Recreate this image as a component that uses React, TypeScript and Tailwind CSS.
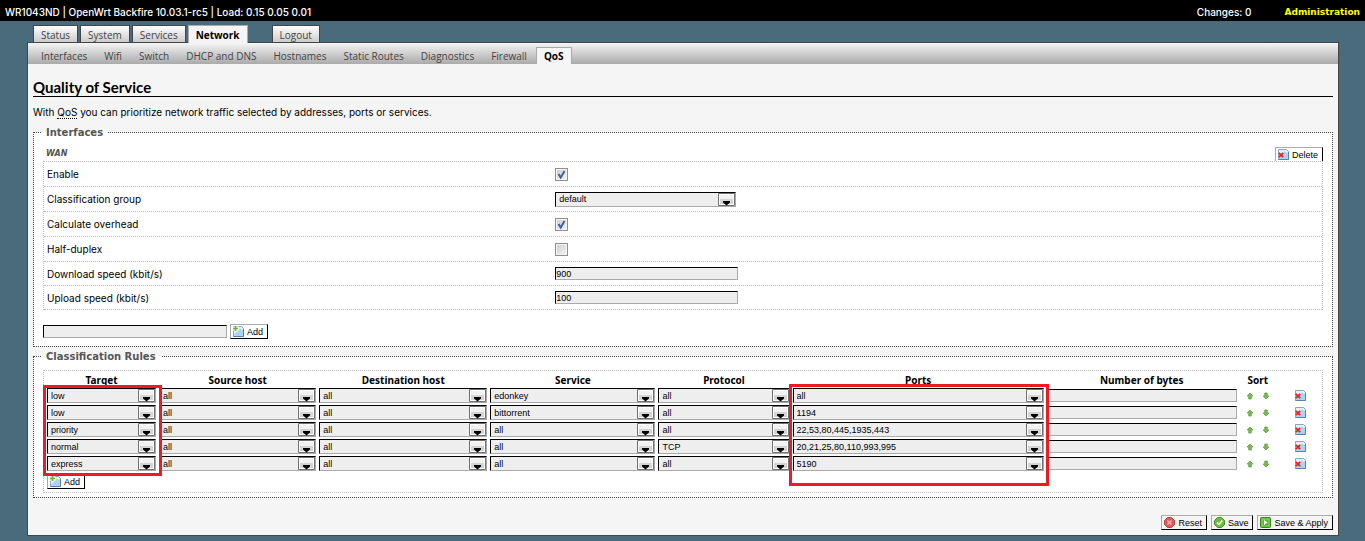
import React from 'react';
import { clsx } from 'clsx';

const TABS = ['Status', 'System', 'Services', 'Network'];
const SUB_TABS = ['Interfaces', 'Wifi', 'Switch', 'DHCP and DNS', 'Hostnames', 'Static Routes', 'Diagnostics', 'Firewall', 'QoS'];

const RULES = [
    { target: 'low', source: 'all', dest: 'all', service: 'edonkey', proto: 'all', ports: 'all' },
    { target: 'low', source: 'all', dest: 'all', service: 'bittorrent', proto: 'all', ports: '1194' },
    { target: 'priority', source: 'all', dest: 'all', service: 'all', proto: 'all', ports: '22,53,80,445,1935,443' },
    { target: 'normal', source: 'all', dest: 'all', service: 'all', proto: 'TCP', ports: '20,21,25,80,110,993,995' },
    { target: 'express', source: 'all', dest: 'all', service: 'all', proto: 'all', ports: '5190' },
];

const FIELD = 'block border border-t-black border-l-black border-r-[#aaa] border-b-[#aaa] bg-[#eee] font-["Liberation_Sans",sans-serif] text-[9px] leading-[12px] text-black outline-none';

function PageIcon({ kind }: { kind: 'add' | 'delete' }) {
    return (
        <svg width="11" height="11" viewBox="0 0 11 11" className="shrink-0" aria-hidden="true">
            <path d="M.5.5h8l2 2v8H.5z" fill="#a9d3f7" stroke="#8ba3c4" />
            <path d="M1 1h7L1 9z" fill="#e3f1fd" />
            <path d="M8 1v2h2" fill="#fff" stroke="#fff" strokeWidth=".8" />
            <path d="M10.500 3v7.500H.5" fill="none" stroke="#5f7fa8" />
            {kind === 'delete' ? (
                <path d="M.8 3.800l4.400 4.400M5.200 3.800L.8 8.200" stroke="#e0261d" strokeWidth="1.900" />
            ) : (
                <>
                    <path d="M0 0h5.500v5H0z" fill="#fff" fillOpacity=".7" />
                    <path d="M2.500 0v5M0 2.500h5" stroke="#6db52c" strokeWidth="1.700" />
                </>
            )}
        </svg>
    );
}

function ResetIcon() {
    return (
        <svg width="11" height="11" viewBox="0 0 11 11" className="shrink-0" aria-hidden="true">
            <path d="M3.500.5h4l3 3v4l-3 3h-4l-3-3v-4z" fill="#dc5a5a" stroke="#b94444" />
            <path d="M3.500 3.500l4 4M7.500 3.500l-4 4" stroke="#f4b5b5" strokeWidth="1.200" />
        </svg>
    );
}

function SaveIcon() {
    return (
        <svg width="11" height="11" viewBox="0 0 11 11" className="shrink-0" aria-hidden="true">
            <path d="M3.500.5h4l3 3v4l-3 3h-4l-3-3v-4z" fill="#6cbb3c" stroke="#469226" />
            <path d="M3 5.500l2 2 3.300-4" fill="none" stroke="#fff" strokeWidth="1.500" />
        </svg>
    );
}

function ApplyIcon() {
    return (
        <svg width="11" height="11" viewBox="0 0 11 11" className="shrink-0" aria-hidden="true">
            <rect x=".5" y=".5" width="10" height="10" rx="1" fill="#58b530" stroke="#37861c" />
            <rect x="2" y="2" width="7" height="7" fill="none" stroke="#a5dc87" strokeWidth=".7" />
            <path d="M4 3l3.500 2.500L4 8z" fill="#fff" />
        </svg>
    );
}

function SortIcon({ down }: { down?: boolean }) {
    return (
        <svg width="8" height="8" viewBox="0 0 8 8" className={clsx(down && 'rotate-180')} aria-hidden="true">
            <path d="M4 1L7 4H5.300v3H2.700V4H1z" fill="#79bd4a" stroke="#5f9a40" strokeWidth=".7" />
        </svg>
    );
}

function Button({ children, className, icon }: { children: React.ReactNode; className?: string; icon: React.ReactNode }) {
    return (
        <button
            type="button"
            className={clsx(
                'flex h-[15px] items-center gap-[3px] border border-t-[#aaa] border-l-[#aaa] border-r-black border-b-black pr-1 pl-[2px] font-["Liberation_Sans",sans-serif] text-[9px] leading-[12px] whitespace-nowrap text-black',
                className
            )}
        >
            {icon}
            {children}
        </button>
    );
}

function Select({ value, id, label, className }: { value: string; id?: string; label?: string; className?: string }) {
    return (
        <div className={clsx('relative', className)}>
            <select id={id} aria-label={label} defaultValue={value} className={clsx(FIELD, 'h-[15px] w-full appearance-none pl-[3px]')}>
                <option>{value}</option>
            </select>
            <svg width="17" height="13" viewBox="0 0 17 13" className="pointer-events-none absolute top-px right-px" aria-hidden="true">
                <path d="M.5.5h16v12H.5z" fill="#fff" stroke="#707070" />
                <path d="M2 2h13v4H2z" fill="#f2f2f2" />
                <path d="M2 6h13v5H2z" fill="#d4d4d4" />
                <path d="M5 8h7v1.500L8.500 12.500 5 9.500z" fill="#000" />
            </svg>
        </div>
    );
}

function Checkbox({ id, checked }: { id: string; checked?: boolean }) {
    return (
        <div className="relative size-[13px]">
            <input
                id={id}
                type="checkbox"
                defaultChecked={checked}
                className="peer block size-[13px] appearance-none border border-[#8e8f8f] bg-linear-to-br from-[#c8ccd2] to-[#f6f6f6] shadow-[inset_0_0_0_1px_#f4f4f4]"
            />
            <svg width="13" height="13" viewBox="0 0 13 13" className="pointer-events-none absolute inset-0 hidden peer-checked:block" aria-hidden="true">
                <path d="M3.500 6l2.200 3.500L9.500 3" fill="none" stroke="#4360a5" strokeWidth="2" />
            </svg>
        </div>
    );
}

function Row({ id, label, children, className }: { id: string; label: string; children: React.ReactNode; className?: string }) {
    return (
        <div className={clsx('grid grid-cols-[2fr_3fr] items-center border-b border-dotted border-[#bbb]', className)}>
            <label htmlFor={id} className="pl-[3px]">{label}</label>
            {children}
        </div>
    );
}

function Th({ children, marked }: { children?: React.ReactNode; marked?: string }) {
    return (
        <th className="relative h-[13px] p-0 text-center align-middle font-['Noto_Sans',sans-serif] text-[10px] leading-[12px] font-bold">
            {children}
            {marked && <span className={clsx('pointer-events-none absolute top-full z-10 border-[3px] border-[#ed1c24]', marked)} />}
        </th>
    );
}

export default function App() {
    return (
        <div className="min-h-screen bg-[#4a6b7c] font-['Inter',sans-serif] text-[10px] leading-[14px] text-black">
            <header className="flex h-[21px] items-center justify-between bg-black px-[5px] pt-[2px] font-medium text-white">
                <span>WR1043ND | OpenWrt Backfire 10.03.1-rc5 | Load: 0.15 0.05 0.01</span>
                <div className="flex gap-[33px]">
                    <a href="#changes">Changes: 0</a>
                    <a href="#admin" className="font-['DejaVu_Sans',sans-serif] text-[9px] font-bold text-[#ff0]">Administration</a>
                </div>
            </header>

            <nav className="relative mt-1 flex h-[18px] gap-[2px] pl-[33px] font-['Open_Sans',sans-serif] text-[#444]">
                {TABS.map((tab) => (
                    <a
                        key={tab}
                        href={`#${tab}`}
                        className={clsx(
                            'border border-b-0 px-[7px] pt-[2px]',
                            tab === 'Network' ? 'border-[#aaa] bg-[#f5f5f5] font-bold text-black' : 'mb-px border-[#444] bg-linear-to-b from-white to-[#ccc]'
                        )}
                    >
                        {tab}
                    </a>
                ))}
                <a href="#logout" className="mb-px ml-[22px] border border-b-0 border-[#444] bg-linear-to-b from-white to-[#ccc] px-[7px] pt-[2px]">
                    Logout
                </a>
            </nav>

            <div className="-mt-px mr-[26px] ml-[27px] border border-[#444] bg-[#f5f5f5]">
                <nav className="flex h-[21px] items-end gap-px bg-linear-to-b from-[#f5f5f5] to-[#aaa] pl-[5px] font-['Open_Sans',sans-serif] text-[#444]">
                    {SUB_TABS.map((tab) => (
                        <a
                            key={tab}
                            href={`#${tab}`}
                            className={clsx(
                                'h-[17px] border border-b-0 px-[7px] pt-px',
                                tab === 'QoS' ? 'border-[#aaa] bg-[#f5f5f5] font-bold text-black' : 'border-transparent'
                            )}
                        >
                            {tab}
                        </a>
                    ))}
                </nav>

                <main className="px-[5px] pb-[5px]">
                    <h2 className="mt-[14px] border-b border-black font-['Lato',sans-serif] text-[15px] leading-[18px] font-bold">Quality of Service</h2>
                    <p className="mt-2">
                        With <abbr title="Quality of Service" className="border-b border-dotted border-black no-underline">QoS</abbr> you can prioritize network traffic selected by addresses, ports or services.
                    </p>

                    <fieldset className="mt-[5px] border border-dotted border-[#444] bg-white px-[9px] pb-[7px]">
                        <legend className="ml-[-2px] px-[5px] pt-[2px] font-['DejaVu_Sans',sans-serif] font-bold text-[#555]">Interfaces</legend>
                        <div className="mt-[7px] flex items-end justify-between">
                            <h3 className="pl-[3px] font-['DejaVu_Sans',sans-serif] text-[8px] font-bold text-[#555] italic">WAN</h3>
                            <Button icon={<PageIcon kind="delete" />} className="-mb-px bg-white">Delete</Button>
                        </div>
                        <div className="relative border border-b-0 border-dotted border-[#bbb] bg-white">
                            <Row id="enable" label="Enable" className="h-[25px]"><Checkbox id="enable" checked /></Row>
                            <Row id="group" label="Classification group" className="h-[25px]"><Select id="group" value="default" className="w-[181px]" /></Row>
                            <Row id="overhead" label="Calculate overhead" className="h-[25px]"><Checkbox id="overhead" checked /></Row>
                            <Row id="duplex" label="Half-duplex" className="h-[25px]"><Checkbox id="duplex" /></Row>
                            <Row id="down" label="Download speed (kbit/s)" className="h-6">
                                <input id="down" type="text" defaultValue="900" className={clsx(FIELD, 'h-[13px] w-[183px]')} />
                            </Row>
                            <Row id="up" label="Upload speed (kbit/s)" className="h-6">
                                <input id="up" type="text" defaultValue="100" className={clsx(FIELD, 'h-[13px] w-[183px]')} />
                            </Row>
                        </div>
                        <div className="mt-[14px] flex items-center gap-[3px]">
                            <input type="text" aria-label="New interface" className={clsx(FIELD, 'h-[13px] w-[184px]')} />
                            <Button icon={<PageIcon kind="add" />} className="bg-white">Add</Button>
                        </div>
                    </fieldset>

                    <fieldset className="mt-px border border-dotted border-[#444] bg-white px-[9px] pb-1">
                        <legend className="ml-[-2px] px-[5px] pt-[2px] font-['DejaVu_Sans',sans-serif] font-bold text-[#555]">Classification Rules</legend>
                        <div className="mt-[6px] border border-dotted border-[#bbb] pb-[3px]">
                            <table className="w-full table-fixed border-separate border-spacing-x-[3px] border-spacing-y-[2px]">
                                <colgroup>
                                    <col className="w-[109px]" />
                                    <col className="w-[157px]" />
                                    <col className="w-[168px]" />
                                    <col className="w-[165px]" />
                                    <col className="w-[131px]" />
                                    <col className="w-[251px]" />
                                    <col className="w-[190px]" />
                                    <col className="w-[36px]" />
                                    <col className="w-[40px]" />
                                </colgroup>
                                <thead>
                                    <tr>
                                        <Th marked="-left-1 -right-[6px] -mt-px h-[91px]">Target</Th>
                                        <Th>Source host</Th>
                                        <Th>Destination host</Th>
                                        <Th>Service</Th>
                                        <Th>Protocol</Th>
                                        <Th marked="-left-1 -right-[5px] -mt-[2px] h-[102px]">Ports</Th>
                                        <Th>Number of bytes</Th>
                                        <Th>Sort</Th>
                                        <Th />
                                    </tr>
                                </thead>
                                <tbody>
                                    {RULES.map((rule, i) => (
                                        <tr key={i}>
                                            <td className="p-0"><Select label="Target" value={rule.target} /></td>
                                            <td className="p-0"><Select label="Source host" value={rule.source} /></td>
                                            <td className="p-0"><Select label="Destination host" value={rule.dest} /></td>
                                            <td className="p-0"><Select label="Service" value={rule.service} /></td>
                                            <td className="p-0"><Select label="Protocol" value={rule.proto} /></td>
                                            <td className="p-0"><Select label="Ports" value={rule.ports} /></td>
                                            <td className="p-0">
                                                <input type="text" aria-label="Number of bytes" className={clsx(FIELD, 'h-[13px] w-full')} />
                                            </td>
                                            <td className="p-0">
                                                <div className="flex justify-center gap-2">
                                                    <button type="button" aria-label="Move up"><SortIcon /></button>
                                                    <button type="button" aria-label="Move down"><SortIcon down /></button>
                                                </div>
                                            </td>
                                            <td className="p-0">
                                                <button type="button" aria-label="Delete rule" className="ml-4 block"><PageIcon kind="delete" /></button>
                                            </td>
                                        </tr>
                                    ))}
                                </tbody>
                            </table>
                            <Button icon={<PageIcon kind="add" />} className="mt-px ml-[3px] bg-white">Add</Button>
                        </div>
                    </fieldset>

                    <div className="mt-[17px] flex justify-end gap-1">
                        <Button icon={<ResetIcon />}>Reset</Button>
                        <Button icon={<SaveIcon />}>Save</Button>
                        <Button icon={<ApplyIcon />}>Save &amp; Apply</Button>
                    </div>
                </main>
            </div>
        </div>
    );
}
